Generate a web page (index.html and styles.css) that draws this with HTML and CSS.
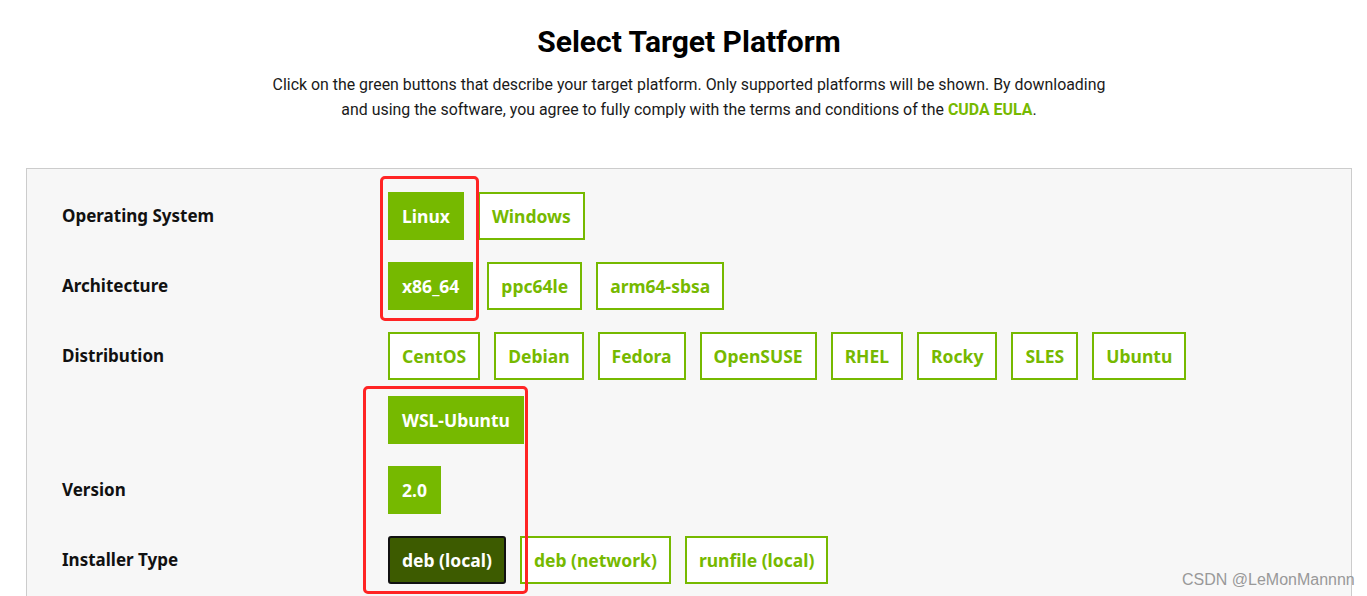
FILE: index.html
```html
<!DOCTYPE html>
<html lang="en">
<head>
<meta charset="utf-8">
<title>Select Target Platform</title>
<link rel="stylesheet" href="styles.css">
</head>
<body>
<div class="page">
  <header class="intro">
    <h1 class="title">Select Target Platform</h1>
    <p class="desc">Click on the green buttons that describe your target platform. Only supported platforms will be shown. By downloading<br>and using the software, you agree to fully comply with the terms and conditions of the <a class="eula" href="#">CUDA EULA</a>.</p>
  </header>

  <section class="panel">
    <div class="row">
      <div class="label">Operating System</div>
      <div class="opts">
        <span class="btn sel">Linux</span>
        <span class="btn">Windows</span>
      </div>
    </div>
    <div class="row">
      <div class="label">Architecture</div>
      <div class="opts">
        <span class="btn sel">x86_64</span>
        <span class="btn">ppc64le</span>
        <span class="btn">arm64-sbsa</span>
      </div>
    </div>
    <div class="row">
      <div class="label">Distribution</div>
      <div class="opts">
        <span class="btn">CentOS</span>
        <span class="btn">Debian</span>
        <span class="btn">Fedora</span>
        <span class="btn">OpenSUSE</span>
        <span class="btn">RHEL</span>
        <span class="btn">Rocky</span>
        <span class="btn">SLES</span>
        <span class="btn">Ubuntu</span>
        <span class="btn sel">WSL-Ubuntu</span>
      </div>
    </div>
    <div class="row">
      <div class="label">Version</div>
      <div class="opts">
        <span class="btn sel">2.0</span>
      </div>
    </div>
    <div class="row">
      <div class="label">Installer Type</div>
      <div class="opts">
        <span class="btn active">deb (local)</span>
        <span class="btn">deb (network)</span>
        <span class="btn">runfile (local)</span>
      </div>
    </div>
    <div class="mark mark-a"></div>
    <div class="mark mark-b"></div>
    <div class="watermark">CSDN @LeMonMannnn</div>
  </section>
</div>
</body>
</html>
```

FILE: styles.css
```css
html, body {
  margin: 0;
  padding: 0;
  background: #ffffff;
}

body {
  font-family: "Noto Sans", "Liberation Sans", sans-serif;
  color: #1a1a1a;
  height: 596px;
  overflow: hidden;
}

.page {
  width: 1326px;
  margin-left: 26px;
}

.intro {
  text-align: center;
  padding-top: 24px;
}

.title {
  margin: 0;
  font-family: "Roboto", "Noto Sans", sans-serif;
  font-size: 30px;
  font-weight: 700;
  line-height: 36px;
  color: #000;
}

.desc {
  margin: 12px 0 0;
  font-family: "Roboto", "Noto Sans", sans-serif;
  font-size: 15.9px;
  line-height: 25px;
  color: #1a1a1a;
}

.eula {
  color: #76b900;
  font-weight: 700;
  text-decoration: none;
}

.panel {
  position: relative;
  margin-top: 46px;
  background: #f7f7f7;
  border: 1px solid #cccccc;
  padding: 23px 0 40px 35px;
  display: flex;
  flex-direction: column;
  gap: 22px;
}

.row {
  display: flex;
  align-items: flex-start;
}

.label {
  width: 326px;
  flex: none;
  line-height: 48px;
  font-size: 17px;
  font-weight: 700;
  color: #111;
}

.opts {
  display: flex;
  flex-wrap: wrap;
  column-gap: 14px;
  row-gap: 16px;
  width: 820px;
}

.btn {
  box-sizing: border-box;
  height: 48px;
  padding: 0 12px;
  border: 2px solid #76b900;
  background: #ffffff;
  color: #76b900;
  font-size: 17.5px;
  font-weight: 700;
  line-height: 44px;
  white-space: nowrap;
}

.btn.sel {
  background: #76b900;
  color: #ffffff;
}

.btn.active {
  background: #3d5b00;
  border-color: #111;
  border-radius: 3px;
  color: #ffffff;
}

.mark {
  position: absolute;
  border: 3px solid #ff2424;
  border-radius: 5px;
  box-sizing: border-box;
}

.mark-a {
  left: 353px;
  top: 7px;
  width: 99px;
  height: 145px;
}

.mark-b {
  left: 336px;
  top: 217px;
  width: 165px;
  height: 208px;
}

.watermark {
  position: absolute;
  left: 1155px;
  top: 402px;
  font-family: "Liberation Sans", Arial, sans-serif;
  font-size: 16px;
  color: #999;
  white-space: nowrap;
}
```
